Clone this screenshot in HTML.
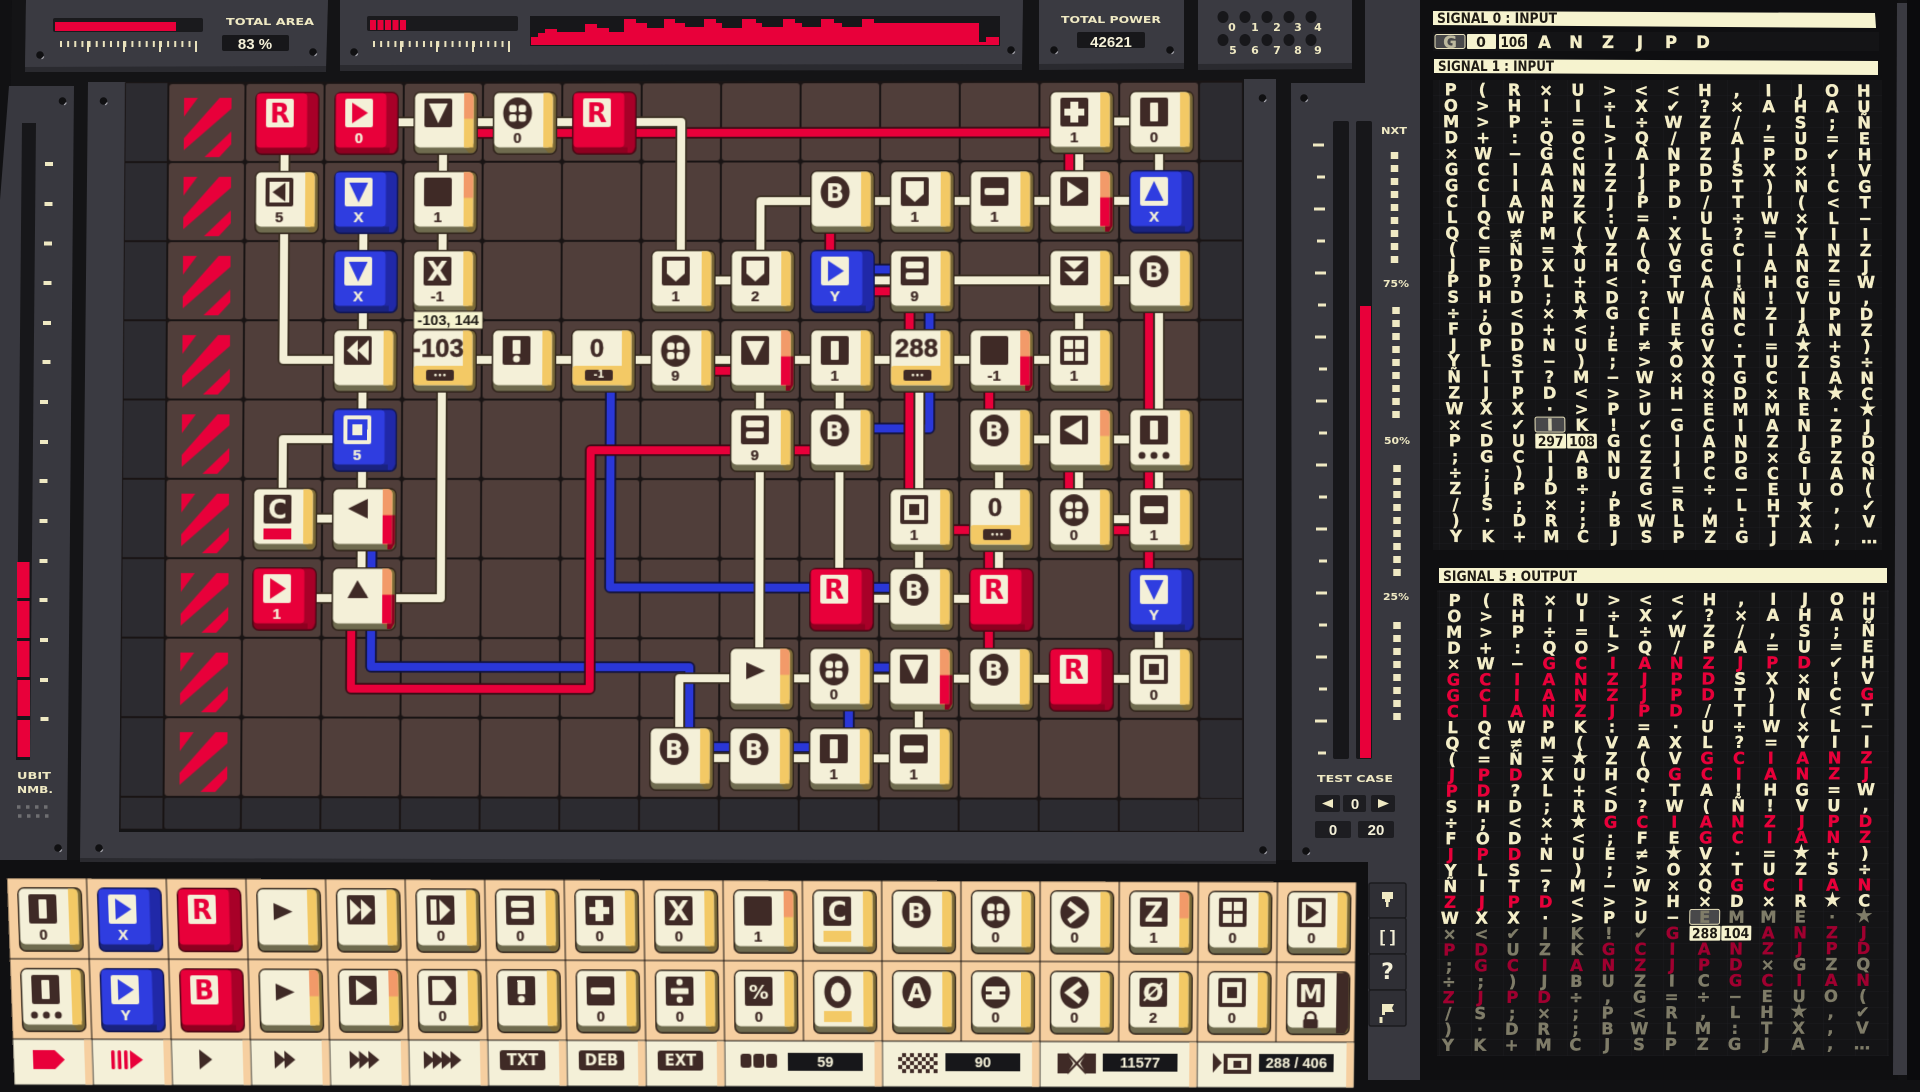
<!DOCTYPE html>
<html><head><meta charset="utf-8"><title>Circuit</title>
<style>
html,body{margin:0;padding:0;background:#111113;width:1920px;height:1080px;overflow:hidden}
svg{display:block}
text{font-family:"DejaVu Sans","Liberation Sans",sans-serif;font-weight:bold;text-anchor:middle}
.v{font-family:"Liberation Sans",sans-serif;font-size:15px;fill:#3f2a26;stroke:#3f2a26;stroke-width:.25}
.w{font-family:"Liberation Sans",sans-serif;font-size:15px;fill:#f4f0d8;stroke:#f4f0d8;stroke-width:.25}
.d{font-family:"Liberation Sans",sans-serif;font-size:26px;fill:#3f2a26;stroke:#3f2a26;stroke-width:.4}
.p{font-size:9px;fill:#f4f0d8}
.g{font-size:25px;fill:#f4f0d8}
.l{font-size:10px;fill:#efe9c3}
.c{font-size:16.5px;fill:#f4eec8;stroke:#f4eec8;stroke-width:.35}
.r{fill:#e8003a;stroke:#e8003a}.q{fill:#a00030;stroke:#a00030}.m{fill:#7f7c68;stroke:#7f7c68}
.t{font-size:20px}
.k{font-size:14px;fill:#1e1a14}
.s{font-size:14px;fill:#1e1a14;text-anchor:start}
.n{font-family:"Liberation Sans",sans-serif;font-size:15px;fill:#f4f0d8}
.b{font-family:"Liberation Sans",sans-serif;font-size:16px;fill:#f4f0d8}
#board,#pal{position:absolute;left:0;top:0;width:0;height:0;transform-origin:0 0}
#board{transform:matrix3d(0.98750,-0.001745,0,-0.000004779,-0.007821,0.98647,0,-0.000006517,0,0,1,0,245.5,83,0,1)}
#pal{transform:matrix3d(0.99743,0.006112,0,0.000003595,0.03702,1.0449,0,0.00003699,0,0,1,0,6.7,878,0,1)}
</style></head><body>

<svg width="0" height="0" style="position:absolute"><defs>
<g id="tc"><rect width="65" height="64" rx="7" fill="#2d2118"/><rect x="1.5" y="1.5" width="62" height="61" rx="5.5" fill="#6f6b4f"/><path d="M51 56V2H59Q63.500 2 63.500 7V56Q63.500 60 60 62H56Z" fill="#7c6a36"/><rect x="1.5" y="1.5" width="59" height="55" rx="5" fill="#f4f0d8"/><path d="M51 1.5h5q4.500 0 4.500 5V56.500H51z" fill="#f3c965"/></g>
<g id="tr"><rect width="65" height="64" rx="7" fill="#470814"/><rect x="1.5" y="1.500" width="62" height="61" rx="5.500" fill="#8e0020"/><path d="M51 1.500h7q5.500 0 5.500 5.500V56L60 62H56V56.500H51z" fill="#a80028"/><rect x="1.5" y="1.500" width="51" height="55" rx="4" fill="#e8003a"/></g>
<g id="tb"><rect width="65" height="64" rx="7" fill="#10154f"/><rect x="1.5" y="1.500" width="62" height="61" rx="5.500" fill="#1a2380"/><path d="M51 1.500h7q5.500 0 5.500 5.500V56L60 62H56V56.500H51z" fill="#2028a8"/><rect x="1.5" y="1.500" width="51" height="55" rx="4" fill="#2f3de0"/></g>
<path id="so" d="M51 1.500h5q4.500 0 4.500 5V27.500H51z" fill="#f29a69"/>
<g id="sr"><path d="M51 1.500h5q4.500 0 4.500 5V27.500H51z" fill="#f29a69"/><path d="M51 27.500h9.500V56.500H51z" fill="#e8003a"/><path d="M60.500 27.500h3V56L60 62H56V56.500h4.500z" fill="#8e0020"/></g>
<rect id="bD" x="11" y="7" width="28" height="29" rx="2" fill="#3f2a26"/>
<rect id="bC" x="11" y="7" width="28" height="29" rx="2" fill="#f4f0d8"/>
<polygon id="gDn" points="15.500,12 34.500,12 25,32"/>
<polygon id="gUp" points="25,11 34.500,31 15.500,31"/>
<polygon id="gRt" points="18,11 34,21.500 18,32"/>
<ellipse id="eD" cx="25" cy="22" rx="14.500" ry="16" fill="#3f2a26"/>

<g id="nI"><use href="#tc"/><use href="#bD"/><rect x="21" y="12" width="8" height="19" rx="1" fill="#f4f0d8"/></g>
<g id="nDn"><use href="#tc"/><use href="#bD"/></g>
<g id="nSh"><use href="#tc"/><use href="#bD"/><polygon points="16,11 34,11 34,24 25,32 16,24" fill="#f4f0d8"/></g>
<g id="nMi"><use href="#tc"/><use href="#bD"/><rect x="15" y="18" width="20" height="7" rx="2" fill="#f4f0d8"/></g>
<g id="nEq"><use href="#tc"/><use href="#bD"/><rect x="16" y="12" width="18" height="7" rx="2" fill="#f4f0d8"/><rect x="16" y="23" width="18" height="7" rx="2" fill="#f4f0d8"/></g>
<g id="nPl"><use href="#tc"/><use href="#bD"/><path d="M21 11h8v7h6v7h-6v7h-8v-7h-6v-7h6z" fill="#f4f0d8"/></g>
<g id="nX"><use href="#tc"/><use href="#bD"/><text class="g" x="25" y="31" style="font-size:27px">X</text></g>
<g id="nBoxL"><use href="#tc"/><use href="#bD"/><rect x="15" y="11" width="20" height="21" fill="#f4f0d8"/><polygon points="31,12 31,31 18,21.500" fill="#3f2a26"/></g>
<g id="nLL"><use href="#tc"/><use href="#bD"/><polygon points="25,11 25,32 14,21.500" fill="#f4f0d8"/><polygon points="36,11 36,32 25,21.500" fill="#f4f0d8"/></g>
<g id="nDD"><use href="#tc"/><use href="#bD"/><polygon points="15,11 35,11 25,20" fill="#f4f0d8"/><polygon points="15,22 35,22 25,32" fill="#f4f0d8"/></g>
<g id="nEx"><use href="#tc"/><use href="#bD"/><rect x="21" y="11" width="8" height="14" rx="1" fill="#f4f0d8"/><circle cx="25" cy="30" r="3.500" fill="#f4f0d8"/></g>
<g id="nFo"><use href="#tc"/><use href="#eD"/><rect x="16.500" y="13.500" width="7.500" height="7.500" rx="2.500" fill="#f4f0d8"/><rect x="26" y="13.500" width="7.500" height="7.500" rx="2.500" fill="#f4f0d8"/><rect x="16.500" y="23" width="7.500" height="7.500" rx="2.500" fill="#f4f0d8"/><rect x="26" y="23" width="7.500" height="7.500" rx="2.500" fill="#f4f0d8"/></g>
<g id="nB"><use href="#tc"/><use href="#eD"/><text class="g" x="25" y="31" style="font-size:24px">B</text></g>
<g id="nA"><use href="#tc"/><use href="#eD"/><text class="g" x="25" y="31" style="font-size:24px">A</text></g>
<g id="nGr"><use href="#tc"/><use href="#bD"/><rect x="15" y="11" width="9" height="9" fill="#f4f0d8"/><rect x="26" y="11" width="9" height="9" fill="#f4f0d8"/><rect x="15" y="23" width="9" height="9" fill="#f4f0d8"/><rect x="26" y="23" width="9" height="9" fill="#f4f0d8"/></g>
<g id="nSq"><use href="#tc"/><use href="#bD"/><rect x="15" y="11" width="20" height="21" fill="#f4f0d8"/><rect x="20" y="16" width="10" height="11" fill="#3f2a26"/></g>
<g id="nC"><use href="#tc"/><use href="#bD"/><text class="g" x="25" y="31" style="font-size:26px">C</text></g>
<g id="nZ"><use href="#tc"/><use href="#bD"/><text class="g" x="25" y="31" style="font-size:26px">Z</text></g>
<g id="nPc"><use href="#tc"/><use href="#bD"/><text class="g" x="25" y="29" style="font-size:20px">%</text></g>
<g id="nDv"><use href="#tc"/><use href="#bD"/><rect x="16" y="18.500" width="18" height="6" rx="1" fill="#f4f0d8"/><circle cx="25" cy="12.500" r="3.200" fill="#f4f0d8"/><circle cx="25" cy="30" r="3.200" fill="#f4f0d8"/></g>
<g id="nO"><use href="#tc"/><ellipse cx="25" cy="22" rx="13.500" ry="16" fill="#3f2a26"/><ellipse cx="25" cy="22" rx="7" ry="9.500" fill="#f4f0d8"/></g>
<g id="nH"><use href="#tc"/><use href="#eD"/><path d="M15 16h20v5h-6v3h6v5H15v-5h6v-3h-6z" fill="#f4f0d8"/></g>
<g id="ncR"><use href="#tc"/><use href="#eD"/><path d="M19 13 31 22 19 31" fill="none" stroke="#f4f0d8" stroke-width="5.500"/></g>
<g id="ncL"><use href="#tc"/><use href="#eD"/><path d="M31 13 19 22 31 31" fill="none" stroke="#f4f0d8" stroke-width="5.500"/></g>
<g id="nSl"><use href="#tc"/><use href="#bD"/><text class="g" x="25" y="30" style="font-size:25px">Ø</text></g>
<g id="nBxR"><use href="#tc"/><use href="#bD"/><rect x="15" y="11" width="20" height="21" fill="#f4f0d8"/><polygon points="19,13 32,21.500 19,30" fill="#3f2a26"/></g>
<g id="nPt"><use href="#tc"/><use href="#bD"/><polygon points="15,11 27,11 35,21.500 27,32 15,32" fill="#f4f0d8"/></g>
<g id="nIR"><use href="#tc"/><use href="#bD"/><rect x="15" y="11" width="6" height="21" fill="#f4f0d8"/><polygon points="24,11 35,21.500 24,32" fill="#f4f0d8"/></g>
<g id="nRR"><use href="#tc"/><use href="#bD"/><polygon points="14,11 14,32 25,21.500" fill="#f4f0d8"/><polygon points="25,11 25,32 36,21.500" fill="#f4f0d8"/></g>
<polygon id="pBR" points="17,15 36,23.500 17,32" fill="#3f2a26"/>
<polygon id="pBL" points="36,11 36,31 16,21" fill="#3f2a26"/>
<polygon id="pBU" points="26,13 37,31 16,31" fill="#3f2a26"/>
<g id="nbDn"><use href="#tb"/><use href="#bC"/><use href="#gDn" fill="#2f3de0"/></g>
<g id="nbUp"><use href="#tb"/><use href="#bC"/><use href="#gUp" fill="#2f3de0"/></g>
<g id="nbRt"><use href="#tb"/><use href="#bC"/><use href="#gRt" fill="#2f3de0"/></g>
<g id="nbSq"><use href="#tb"/><use href="#bC"/><rect x="15" y="11" width="20" height="21" fill="#2f3de0"/><rect x="20" y="16" width="10" height="11" fill="#f4f0d8"/></g>
<g id="nR"><use href="#tr"/><use href="#bC"/><text x="25" y="31" style="font-size:26px;fill:#e8003a">R</text></g>
<g id="nrB"><use href="#tr"/><use href="#bC"/><text x="25" y="31" style="font-size:26px;fill:#e8003a">B</text></g>
<g id="nrRt"><use href="#tr"/><use href="#bC"/><use href="#gRt" fill="#e8003a"/></g>
<g id="nDs"><use href="#tc"/><rect x="1.500" y="37" width="59" height="19.500" rx="3" fill="#f3c965"/><rect x="14" y="41" width="28" height="11" rx="2" fill="#3f2a26"/></g>
<g id="dots"><circle cx="13" cy="47" r="3.500" fill="#3f2a26"/><circle cx="25" cy="47" r="3.500" fill="#3f2a26"/><circle cx="37" cy="47" r="3.500" fill="#3f2a26"/></g>
<g id="st"><polygon points="0,0 14,0 0,19"/><polygon points="0,53 0,41 36,0 48,0 48,11"/><polygon points="21,60 48,34 48,47 36,60"/></g>
<g id="sc"><circle r="3.800" fill="#101012"/><path d="M1.500 3.800A4 4 0 0 0 3.800 1.500" stroke="#a5a5ad" stroke-width="1.200" fill="none"/></g>
<pattern id="pc" width="80" height="80" patternUnits="userSpaceOnUse"><rect x="1" y="1" width="78" height="78" rx="3" fill="#503e3a"/></pattern>
<pattern id="pd" width="80" height="80" patternUnits="userSpaceOnUse"><rect x="1" y="1" width="78" height="78" rx="2" fill="#2c2b30"/></pattern>
<pattern id="ck" width="8" height="8" patternUnits="userSpaceOnUse"><rect width="4" height="4" fill="#3f2a26"/><rect x="4" y="4" width="4" height="4" fill="#3f2a26"/></pattern>
<pattern id="gl" width="32" height="16" patternUnits="userSpaceOnUse"><path d="M32 0V16M0 16H32" stroke="#1d1d20" stroke-width="1"/></pattern>
<path id="wB" fill="none" stroke-linejoin="round" d="M600 189H680M690 200V349H600M370 280V509H680M130 440V589H450V680M450 669H610M610 589V669M600 589H680"/>
<path id="wR" fill="none" stroke-linejoin="round" d="M200 51H840M830 51V120M590 120V200M600 211H680M670 211V440M440 291H520M750 280V360M910 200V520M830 360V440M750 440V600M680 451H760M840 451H920M110 520V611H350V371H600"/>
<path id="wC" fill="none" stroke-linejoin="round" d="M40 40V280H120M120 120V520M120 360H40V440H120M40 520H120M200 40V280M200 280V520H120M120 40H440V200M840 40H920M840 40V120M920 40V120M520 200V120H920M440 200H520M600 200H920M840 200V280M920 200V440M920 520V600M200 280H840M520 280V600M600 280V520M680 280V520M760 360V520M760 360H920M840 360V440M840 440H920M600 520H760M440 680V600H920M680 600V680M440 680H680"/>
</defs></svg>

<svg width="1920" height="1080" viewBox="0 0 1920 1080" style="position:absolute;left:0;top:0">
<rect width="1920" height="1080" fill="#111113"/>
<!-- rear dark area -->
<polygon points="12,0 1420,0 1420,880 0,880" fill="#141416"/>
<rect x="0" y="860" width="1370" height="220" fill="#101012"/>
<!-- top panels -->
<g fill="#2a2a2f"><polygon points="26,0 328,0 326,72 25,72"/><polygon points="340,0 1023,0 1022,70 340,71"/><polygon points="1039,0 1184,0 1184,69 1039,70"/><polygon points="1198,0 1352,0 1352,69 1198,70"/></g>
<g fill="#3a3a41"><polygon points="26,0 328,0 326,66 25,67"/><polygon points="340,0 1023,0 1022,64 340,65"/><polygon points="1039,0 1184,0 1184,63 1039,64"/><polygon points="1198,0 1352,0 1352,63 1198,64"/></g>
<!-- panel 1 -->
<rect x="53" y="18" width="150" height="14" rx="2" fill="#1a1a1d"/><rect x="55" y="22" width="121" height="9" fill="#e8003a"/>
<path d="M60 44H197" stroke="#e9e2bd" stroke-width="6" stroke-dasharray="2 5.140"/>
<path d="M88 41V52M124 41V52M160 41V52M196 41V52" stroke="#e9e2bd" stroke-width="2"/>
<text class="l" x="270" y="25" textLength="88" lengthAdjust="spacingAndGlyphs">TOTAL AREA</text>
<rect x="222" y="35" width="67" height="16" rx="2" fill="#17171a"/><text class="n" x="255" y="49" style="font-size:15px">83 %</text>
<use href="#sc" x="40" y="55"/><use href="#sc" x="313" y="52"/>
<!-- panel 2 -->
<rect x="367" y="16" width="151" height="15" rx="2" fill="#1a1a1d"/>
<path d="M370 25H407" stroke="#e8003a" stroke-width="10" stroke-dasharray="6 1.500"/>
<path d="M373 44H510" stroke="#e9e2bd" stroke-width="6" stroke-dasharray="2 5.140"/>
<path d="M401 41V52M437 41V52M473 41V52M509 41V52" stroke="#e9e2bd" stroke-width="2"/>
<rect x="530" y="16" width="470" height="30" fill="#17171a"/>
<path d="M531 45V37H538V33H545V29H557V32H585V24H597V28H609V32H624V19H636V23H647V28H664V19H675V23H685V27H704V19H716V23H722V28H742V19H756V23H762V27H783V19H795V23H802V27H821V19H834V23H842V27H862V19H874V23H979V42H986V37H999V45Z" fill="#e8003a"/>
<use href="#sc" x="354" y="52"/><use href="#sc" x="1011" y="50"/>
<!-- panel 3 -->
<text class="l" x="1111" y="23" textLength="100" lengthAdjust="spacingAndGlyphs">TOTAL POWER</text>
<rect x="1077" y="32" width="68" height="16" rx="2" fill="#17171a"/><text class="n" x="1111" y="47">42621</text>
<use href="#sc" x="1054" y="50"/><use href="#sc" x="1170" y="50"/>
<!-- panel 4 -->
<g fill="#17171a"><ellipse cx="1223" cy="17" rx="5.500" ry="6"/><ellipse cx="1245" cy="17" rx="5.500" ry="6"/><ellipse cx="1267" cy="17" rx="5.500" ry="6"/><ellipse cx="1289" cy="17" rx="5.500" ry="6"/><ellipse cx="1311" cy="17" rx="5.500" ry="6"/><ellipse cx="1223" cy="40" rx="5.500" ry="6"/><ellipse cx="1245" cy="40" rx="5.500" ry="6"/><ellipse cx="1267" cy="40" rx="5.500" ry="6"/><ellipse cx="1289" cy="40" rx="5.500" ry="6"/><ellipse cx="1311" cy="40" rx="5.500" ry="6"/></g>
<g style="font-size:11px"><text class="l" x="1232" y="31" style="font-size:11px">0</text><text class="l" x="1255" y="31" style="font-size:11px">1</text><text class="l" x="1277" y="31" style="font-size:11px">2</text><text class="l" x="1298" y="31" style="font-size:11px">3</text><text class="l" x="1318" y="31" style="font-size:11px">4</text><text class="l" x="1233" y="54" style="font-size:11px">5</text><text class="l" x="1255" y="54" style="font-size:11px">6</text><text class="l" x="1277" y="54" style="font-size:11px">7</text><text class="l" x="1298" y="54" style="font-size:11px">8</text><text class="l" x="1318" y="54" style="font-size:11px">9</text></g>

<!-- left panel -->
<polygon points="9,86 74,86 67,860 0,860 0,200" fill="#38383f"/>
<polygon points="22,123 36,123 30,760 16,760" fill="#17171a"/>
<g fill="#e8003a"><rect x="17" y="562" width="12.500" height="36"/><rect x="17" y="601" width="12.500" height="37"/><rect x="17" y="641" width="12.500" height="36"/><rect x="17.500" y="680" width="12.500" height="36"/><rect x="17.500" y="720" width="12.500" height="37"/></g>
<path d="M45 164h8M44.500 204h8M44 243.500h8M43.500 283h8M43 323h8M42.500 362h8M40 402h8M40 442h8M39.500 481h8M39.500 521h8M39.500 561h8M39.500 600h8M40 640h8M40 680h8M40.500 719h8" stroke="#efe9c3" stroke-width="4"/>
<text class="l" x="34" y="779" textLength="34" lengthAdjust="spacingAndGlyphs">UBIT</text>
<text class="l" x="35" y="793" textLength="36" lengthAdjust="spacingAndGlyphs">NMB.</text>
<path d="M17 807H52M18 816H53" stroke="#6f6f72" stroke-width="3.500" stroke-dasharray="3.500 5.500"/>
<use href="#sc" x="62.500" y="101"/><use href="#sc" x="58" y="848"/>
<!-- board frame -->
<polygon points="88,82 126,82 119,832 1244,832 1244,79 1276,79 1276,863 80,860" fill="#3a3a41"/>
<polygon points="80,858 1276,861 1276,864 80,862" fill="#2a2a2f"/>
<use href="#sc" x="103.500" y="101"/><use href="#sc" x="99" y="848"/><use href="#sc" x="1262.500" y="98"/><use href="#sc" x="1263" y="850"/>
<!-- right panel -->
<polygon points="1291,83 1365,83 1365,0 1420,0 1420,1080 1368,1080 1368,862 1292,862" fill="#38383f"/>
<use href="#sc" x="1304" y="98"/><use href="#sc" x="1306" y="851"/>
<rect x="1333" y="121" width="16" height="638" rx="2" fill="#17171a"/>
<rect x="1356" y="121" width="16" height="638" rx="2" fill="#17171a"/>
<rect x="1360" y="306" width="11" height="452" fill="#e8003a"/>
<path d="M1313 145h11M1317 177h8M1314 209h11M1317 241h8M1315 273h11M1318 305h8M1315 337h11M1319 369h8M1316 401h11M1319 433h8M1316 465h11M1319 497h8M1316 529h11M1319 561h8M1316 593h11M1319 625h8M1316 657h11M1319 689h8M1315 721h12M1318 753h8" stroke="#efe9c3" stroke-width="3"/>
<text class="l" x="1394" y="134" textLength="26" lengthAdjust="spacingAndGlyphs">NXT</text>
<path d="M1394.500 152V269" stroke="#efe9c3" stroke-width="7.500" stroke-dasharray="7 6"/>
<text class="l" x="1396" y="287" textLength="26" lengthAdjust="spacingAndGlyphs">75%</text>
<path d="M1396 307V424" stroke="#efe9c3" stroke-width="7.500" stroke-dasharray="7 6"/>
<text class="l" x="1397" y="444" textLength="26" lengthAdjust="spacingAndGlyphs">50%</text>
<path d="M1397 465V582" stroke="#efe9c3" stroke-width="7.500" stroke-dasharray="7 6"/>
<text class="l" x="1396" y="600" textLength="26" lengthAdjust="spacingAndGlyphs">25%</text>
<path d="M1397 622V726" stroke="#efe9c3" stroke-width="7.500" stroke-dasharray="7 6"/>
<text class="l" x="1355" y="782" textLength="76" lengthAdjust="spacingAndGlyphs">TEST CASE</text>
<g fill="#1d1d21"><rect x="1315" y="795" width="25" height="17" rx="2"/><rect x="1343" y="795" width="23" height="17" rx="2"/><rect x="1371" y="795" width="24" height="17" rx="2"/><rect x="1315" y="821" width="36" height="17" rx="2"/><rect x="1358" y="821" width="36" height="17" rx="2"/></g>
<polygon points="1322,803.500 1333,799 1333,808" fill="#efe9c3"/><polygon points="1389,803.500 1378,799 1378,808" fill="#efe9c3"/>
<text class="n" x="1355" y="809">0</text><text class="n" x="1333" y="835">0</text><text class="n" x="1376" y="835">20</text>
<!-- side tool buttons -->
<g fill="#2f2f35" stroke="#1b1b1e" stroke-width="1.500"><rect x="1369" y="883" width="37" height="35" rx="2"/><rect x="1369" y="918" width="37" height="36" rx="2"/><rect x="1369" y="954" width="37" height="36" rx="2"/><rect x="1369" y="990" width="37" height="36" rx="2"/></g>
<path d="M1382 892h11v7h-3v3h-1.500v5h-2.500v-5h-1v-3h-3z" fill="#efe9c3"/>
<text class="b" x="1387.500" y="942" style="font-size:17px">[ ]</text>
<text class="b" x="1387.500" y="979" style="font-size:22px;font-family:'DejaVu Sans'">?</text>
<path d="M1382 1004h12l-2 4 2 4h-9v3h-3zM1379.500 1017h3v6h-3z" fill="#efe9c3"/>

<!-- signal panel -->
<rect x="1420" y="0" width="478" height="1080" fill="#0f0f11"/>
<polygon points="1897,3 1907,3 1907,1075 1893,1075" fill="#3a3a41"/>
<rect x="1907" y="0" width="13" height="1080" fill="#0b0b0d"/>
<rect x="1433" y="32" width="446" height="19" fill="#141416"/>
<rect x="1433" y="80" width="449" height="470" fill="#141416"/><rect x="1433" y="80" width="449" height="470" fill="url(#gl)"/>
<rect x="1437" y="590" width="452" height="466" fill="#141416"/><rect x="1437" y="590" width="452" height="466" fill="url(#gl)"/>
<polygon points="1433,11 1875,13 1876,28 1433,25" fill="#f6f3cf"/>
<text class="s" x="1437" y="23" textLength="120" lengthAdjust="spacingAndGlyphs">SIGNAL 0 : INPUT</text>
<rect x="1435" y="34.500" width="30" height="14" rx="2" fill="#48484a" stroke="#e9e2bd"/><text class="c" x="1450" y="48" style="fill:#bdb99f;stroke:#bdb99f">G</text>
<rect x="1467" y="34" width="29" height="15" rx="1" fill="#f6f3cf"/><text class="k" x="1481" y="47">0</text>
<rect x="1499" y="34" width="28" height="15" rx="1" fill="#f6f3cf"/><text class="k" x="1513" y="47" textLength="25" lengthAdjust="spacingAndGlyphs">106</text>
<text class="c" x="1544.500 1576 1608 1640 1671 1703" y="48">ANZJPD</text>
<polygon points="1434,59 1878,61 1878,75 1434,73" fill="#f6f3cf"/>
<text class="s" x="1438" y="71" textLength="116" lengthAdjust="spacingAndGlyphs">SIGNAL 1 : INPUT</text>
<polygon points="1439,568 1887,568 1887,583 1439,583" fill="#f6f3cf"/>
<text class="s" x="1443" y="581" textLength="134" lengthAdjust="spacingAndGlyphs">SIGNAL 5 : OUTPUT</text>

<g transform="matrix(0.993,0.003,0.0118,0.997,1450.7,89.3)">
<rect x="81" y="328.500" width="30" height="15" rx="2" fill="#48484a" stroke="#e9e2bd"/>
<rect x="81" y="345" width="31" height="15" rx="1" fill="#f6f3cf"/><rect x="113" y="345" width="30" height="15" rx="1" fill="#f6f3cf"/>
<text class="k" x="96.500" y="357.500" textLength="26" lengthAdjust="spacingAndGlyphs">297</text><text class="k" x="128" y="357.500" textLength="26" lengthAdjust="spacingAndGlyphs">108</text>
<text class="c" x="96" y="342" style="fill:#cfcbae;stroke:#cfcbae">I</text>
<text class="c" x="0 32 64 96 128 160 192 224 256 288 320 352 384 416" y="6">P(R×U&gt;&lt;&lt;H,IJOH</text>
<text class="c" x="0 32 64 96 128 160 192 224 256 288 320 352 384 416" y="22">O&gt;HII÷X✔?×AHAU</text>
<text class="c" x="0 32 64 96 128 160 192 224 256 288 320 352 384 416" y="38">M&gt;P÷=L÷WZ/,S;Ñ</text>
<text class="c" x="0 32 64 96 128 160 192 224 256 288 320 352 384 416" y="54">D+:QO&gt;Q/PA=U=E</text>
<text class="c" x="0 32 64 96 128 160 192 224 256 288 320 352 384 416" y="70">×W−GCIANZJPD✔H</text>
<text class="c" x="0 32 64 96 128 160 192 224 256 288 320 352 384 416" y="86">GCIANZJPDSX×!V</text>
<text class="c" x="0 32 64 96 128 160 192 224 256 288 320 352 384 416" y="102">GCIANZJPDT)NCG</text>
<text class="c" x="0 32 64 96 128 160 192 224 256 288 320 352 384 416" y="118">CIANZJPD/TI(&lt;T</text>
<text class="c" x="0 32 64 96 128 160 192 224 256 288 320 352 384 416" y="134">LQWPK:=·U÷W×L−</text>
<text class="c" x="0 32 64 96 128 160 192 224 256 288 320 352 384 416" y="150">QC≠M(VAXL?=YII</text>
<text class="c" x="0 32 64 96 128 160 192 224 256 288 320 352 384 416" y="166">(=Ñ=<tspan class="t">★</tspan>Z(VGCIANZ</text>
<text class="c" x="0 32 64 96 128 160 192 224 256 288 320 352 384 416" y="182">JPDXUHQGCIANZJ</text>
<text class="c" x="0 32 64 96 128 160 192 224 256 288 320 352 384 416" y="198">PD?L+&lt;·TA!HG=W</text>
<text class="c" x="0 32 64 96 128 160 192 224 256 288 320 352 384 416" y="214">SHD;RD?W(Ñ!VU,</text>
<text class="c" x="0 32 64 96 128 160 192 224 256 288 320 352 384 416" y="230">÷;&lt;×<tspan class="t">★</tspan>GCIANZJPD</text>
<text class="c" x="0 32 64 96 128 160 192 224 256 288 320 352 384 416" y="246">FOD+&lt;;FEGCIANZ</text>
<text class="c" x="0 32 64 96 128 160 192 224 256 288 320 352 384 416" y="262">JPDNUE≠<tspan class="t">★</tspan>V·=<tspan class="t">★</tspan>+)</text>
<text class="c" x="0 32 64 96 128 160 192 224 256 288 320 352 384 416" y="278">YLS−);&gt;OXTUZS÷</text>
<text class="c" x="0 32 64 96 128 160 192 224 256 288 320 352 384 416" y="294">ÑIT?M−W×QGCIAN</text>
<text class="c" x="0 32 64 96 128 160 192 224 256 288 320 352 384 416" y="310">ZJPD&lt;&gt;&gt;H×D×R<tspan class="t">★</tspan>C</text>
<text class="c" x="0 32 64 96 128 160 192 224 256 288 320 352 384 416" y="326">WXX·&gt;PU−EMME·<tspan class="t">★</tspan></text>
<text class="c" x="0 32 64 128 160 192 224 256 288 320 352 384 416" y="342">×&lt;✔K!✔GCIANZJ</text>
<text class="c" x="0 32 64 160 192 224 256 288 320 352 384 416" y="358">PDUGCIANZJPD</text>
<text class="c" x="0 32 64 96 128 160 192 224 256 288 320 352 384 416" y="374">;GCIANZJPD×GZQ</text>
<text class="c" x="0 32 64 96 128 160 192 224 256 288 320 352 384 416" y="390">÷;)JBUZICGCIAN</text>
<text class="c" x="0 32 64 96 128 160 192 224 256 288 320 352 384 416" y="406">ZJPD÷,G=÷−EUO(</text>
<text class="c" x="0 32 64 96 128 160 192 224 256 288 320 352 384 416" y="422">/S;×;P&lt;R,LH<tspan class="t">★</tspan>,✔</text>
<text class="c" x="0 32 64 96 128 160 192 224 256 288 320 352 384 416" y="438">)·DR;BWLM:TX,V</text>
<text class="c" x="0 32 64 96 128 160 192 224 256 288 320 352 384 416" y="454">YK+MCJSPZGJA,…</text>
</g>

<g transform="matrix(0.9957,-0.0036,-0.015,0.993,1454.6,600)">
<rect x="241" y="312.500" width="30" height="15" rx="2" fill="#48484a" stroke="#e9e2bd"/>
<rect x="241" y="329" width="31" height="15" rx="1" fill="#f6f3cf"/><rect x="273" y="329" width="30" height="15" rx="1" fill="#f6f3cf"/>
<text class="k" x="256.500" y="341.500" textLength="26" lengthAdjust="spacingAndGlyphs">288</text><text class="k" x="288" y="341.500" textLength="26" lengthAdjust="spacingAndGlyphs">104</text>
<text class="c" x="0 32 64 96 128 160 192 224 256 288 320 352 384 416" y="6">P(R×U&gt;&lt;&lt;H,IJOH</text>
<text class="c" x="0 32 64 96 128 160 192 224 256 288 320 352 384 416" y="22">O&gt;HII÷X✔?×AHAU</text>
<text class="c" x="0 32 64 96 128 160 192 224 256 288 320 352 384 416" y="38">M&gt;P÷=L÷WZ/,S;Ñ</text>
<text class="c" x="0 32 64 96 128 160 192 224 256 288 320 352 384 416" y="54">D+:QO&gt;Q/PA=U=E</text>
<text class="c" x="0 32 64 96 128 160 192 224 256 288 320 352 384 416" y="70">×W−<tspan class="r">GCIANZJPD</tspan>✔H</text>
<text class="c" x="0 32 64 96 128 160 192 224 256 288 320 352 384 416" y="86"><tspan class="r">GCIANZJPD</tspan>SX×!V</text>
<text class="c" x="0 32 64 96 128 160 192 224 256 288 320 352 384 416" y="102"><tspan class="r">GCIANZJPD</tspan>T)NC<tspan class="r">G</tspan></text>
<text class="c" x="0 32 64 96 128 160 192 224 256 288 320 352 384 416" y="118"><tspan class="r">CIANZJPD</tspan>/TI(&lt;T</text>
<text class="c" x="0 32 64 96 128 160 192 224 256 288 320 352 384 416" y="134">LQWPK:=·U÷W×L−</text>
<text class="c" x="0 32 64 96 128 160 192 224 256 288 320 352 384 416" y="150">QC≠M(VAXL?=YII</text>
<text class="c" x="0 32 64 96 128 160 192 224 256 288 320 352 384 416" y="166">(=Ñ=<tspan class="t">★</tspan>Z(V<tspan class="r">GCIANZ</tspan></text>
<text class="c" x="0 32 64 96 128 160 192 224 256 288 320 352 384 416" y="182"><tspan class="r">JPD</tspan>XUHQ<tspan class="r">GCIANZJ</tspan></text>
<text class="c" x="0 32 64 96 128 160 192 224 256 288 320 352 384 416" y="198"><tspan class="r">PD</tspan>?L+&lt;·TA!HG=W</text>
<text class="c" x="0 32 64 96 128 160 192 224 256 288 320 352 384 416" y="214">SHD;RD?W(Ñ!VU,</text>
<text class="c" x="0 32 64 96 128 160 192 224 256 288 320 352 384 416" y="230">÷;&lt;×<tspan class="t">★</tspan><tspan class="r">GCIANZJPD</tspan></text>
<text class="c" x="0 32 64 96 128 160 192 224 256 288 320 352 384 416" y="246">FOD+&lt;;FE<tspan class="r">GCIANZ</tspan></text>
<text class="c" x="0 32 64 96 128 160 192 224 256 288 320 352 384 416" y="262"><tspan class="r">JPD</tspan>NUE≠<tspan class="t">★</tspan>V·=<tspan class="t">★</tspan>+)</text>
<text class="c" x="0 32 64 96 128 160 192 224 256 288 320 352 384 416" y="278">YLS−);&gt;OXTUZS÷</text>
<text class="c" x="0 32 64 96 128 160 192 224 256 288 320 352 384 416" y="294">ÑIT?M−W×Q<tspan class="r">GCIAN</tspan></text>
<text class="c" x="0 32 64 96 128 160 192 224 256 288 320 352 384 416" y="310"><tspan class="r">ZJPD</tspan>&lt;&gt;&gt;H×D×R<tspan class="t">★</tspan>C</text>
<text class="c" x="0 32 64 96 128 160 192 224 256 288 320 352 384 416" y="326">WXX·&gt;PU−<tspan class="m">EMME·<tspan class="t">★</tspan></tspan></text>
<text class="c" x="0 32 64 96 128 160 192 224 320 352 384 416" y="342" style="fill:#7f7c68;stroke:#7f7c68">×&lt;✔IK!✔<tspan class="q">GANZJ</tspan></text>
<text class="c" x="0 32 64 96 128 160 192 224 256 288 320 352 384 416" y="358" style="fill:#7f7c68;stroke:#7f7c68"><tspan class="q">PD</tspan>UZK<tspan class="q">GCIANZJPD</tspan></text>
<text class="c" x="0 32 64 96 128 160 192 224 256 288 320 352 384 416" y="374" style="fill:#7f7c68;stroke:#7f7c68">;<tspan class="q">GCIANZJPD</tspan>×GZQ</text>
<text class="c" x="0 32 64 96 128 160 192 224 256 288 320 352 384 416" y="390" style="fill:#7f7c68;stroke:#7f7c68">÷;)JBUZIC<tspan class="q">GCIAN</tspan></text>
<text class="c" x="0 32 64 96 128 160 192 224 256 288 320 352 384 416" y="406" style="fill:#7f7c68;stroke:#7f7c68"><tspan class="q">ZJPD</tspan>÷,G=÷−EUO(</text>
<text class="c" x="0 32 64 96 128 160 192 224 256 288 320 352 384 416" y="422" style="fill:#7f7c68;stroke:#7f7c68">/S;×;P&lt;R,LH<tspan class="t">★</tspan>,✔</text>
<text class="c" x="0 32 64 96 128 160 192 224 256 288 320 352 384 416" y="438" style="fill:#7f7c68;stroke:#7f7c68">)·DR;BWLM:TX,V</text>
<text class="c" x="0 32 64 96 128 160 192 224 256 288 320 352 384 416" y="454" style="fill:#7f7c68;stroke:#7f7c68">YK+MCJSPZGJA,…</text>
</g>
</svg>

<!-- BOARD -->
<div id="board"><svg width="1150" height="780" viewBox="-130 -10 1150 780" style="position:absolute;left:-130px;top:-10px;overflow:visible">
<rect x="-122" y="-1" width="1126" height="754" fill="#191414"/>
<rect x="0" y="0" width="960" height="720" fill="url(#pc)"/>
<rect x="960" y="0" width="43" height="720" fill="url(#pd)"/>
<rect x="-121" y="0" width="42" height="752" fill="#2c2b30"/>
<rect x="-1" y="720" width="961" height="32" fill="url(#pd)"/>
<rect x="960" y="720" width="43" height="32" fill="#2c2b30"/>
<rect x="-77" y="721" width="76" height="31" rx="2" fill="#2c2b30"/>
<path d="M-121 80H-79M-121 160H-79M-121 240H-79M-121 320H-79M-121 400H-79M-121 480H-79M-121 560H-79M-121 640H-79M-121 720H-79M960 80H1003M960 160H1003M960 240H1003M960 320H1003M960 400H1003M960 480H1003M960 560H1003M960 640H1003" stroke="#191414" stroke-width="2"/>
<g fill="#503e3a"><rect x="-77" y="1" width="76" height="78" rx="3"/><rect x="-77" y="81" width="76" height="78" rx="3"/><rect x="-77" y="161" width="76" height="78" rx="3"/><rect x="-77" y="241" width="76" height="78" rx="3"/><rect x="-77" y="321" width="76" height="78" rx="3"/><rect x="-77" y="401" width="76" height="78" rx="3"/><rect x="-77" y="481" width="76" height="78" rx="3"/><rect x="-77" y="561" width="76" height="78" rx="3"/><rect x="-77" y="641" width="76" height="78" rx="3"/></g>
<g fill="#e8003a"><use href="#st" x="-62" y="15"/><use href="#st" x="-62" y="95"/><use href="#st" x="-62" y="175"/><use href="#st" x="-62" y="255"/><use href="#st" x="-62" y="335"/><use href="#st" x="-62" y="415"/><use href="#st" x="-62" y="495"/><use href="#st" x="-62" y="575"/><use href="#st" x="-62" y="655"/></g>
<!-- wires -->
<use href="#wB" stroke="#10123f" stroke-width="11.500"/><use href="#wB" stroke="#2a37d8" stroke-width="8"/>
<use href="#wR" stroke="#3c0a14" stroke-width="11.500"/><use href="#wR" stroke="#e8003a" stroke-width="8"/>
<use href="#wC" stroke="#3a2f22" stroke-width="11.500"/><use href="#wC" stroke="#f3efd6" stroke-width="8"/>
<!-- row 0 -->
<use href="#nR" x="10" y="9"/>
<use href="#nrRt" x="90" y="9"/><text class="w" x="115" y="61">0</text>
<use href="#nDn" x="170" y="9"/><use href="#gDn" x="170" y="9" fill="#f4f0d8"/><use href="#so" x="170" y="9"/>
<use href="#nFo" x="250" y="9"/><text class="v" x="275" y="61">0</text>
<use href="#nR" x="330" y="9"/>
<use href="#nPl" x="810" y="9"/><text class="v" x="835" y="61">1</text>
<use href="#nI" x="890" y="9"/><text class="v" x="915" y="61">0</text>
<!-- row 1 -->
<use href="#nBoxL" x="10" y="89"/><text class="v" x="35" y="141">5</text>
<use href="#nbDn" x="90" y="89"/><text class="w" x="115" y="141">X</text>
<use href="#nDn" x="170" y="89"/><use href="#so" x="170" y="89"/><text class="v" x="195" y="141">1</text>
<use href="#nB" x="570" y="89"/>
<use href="#nSh" x="650" y="89"/><text class="v" x="675" y="141">1</text>
<use href="#nMi" x="730" y="89"/><text class="v" x="755" y="141">1</text>
<use href="#nDn" x="810" y="89"/><use href="#gRt" x="810" y="89" fill="#f4f0d8"/><use href="#sr" x="810" y="89"/>
<use href="#nbUp" x="890" y="89"/><text class="w" x="915" y="141">X</text>
<!-- row 2 -->
<use href="#nbDn" x="90" y="169"/><text class="w" x="115" y="221">X</text>
<use href="#nX" x="170" y="169"/><text class="v" x="195" y="221">-1</text>
<use href="#nSh" x="410" y="169"/><text class="v" x="435" y="221">1</text>
<use href="#nSh" x="490" y="169"/><text class="v" x="515" y="221">2</text>
<use href="#nbRt" x="570" y="169"/><text class="w" x="595" y="221">Y</text>
<use href="#nEq" x="650" y="169"/><text class="v" x="675" y="221">9</text>
<use href="#nDD" x="810" y="169"/>
<use href="#nB" x="890" y="169"/>
<!-- row 3 -->
<use href="#nLL" x="90" y="249"/>
<use href="#nDs" x="170" y="249"/><text class="d" x="196" y="277">-103</text><text class="p" x="198" y="298" style="font-size:7px">•••</text>
<use href="#nEx" x="250" y="249"/>
<use href="#nDs" x="330" y="249"/><text class="d" x="356" y="277">0</text><text class="p" x="358" y="298" style="font-size:10px">-1</text>
<use href="#nFo" x="410" y="249"/><text class="v" x="435" y="301">9</text>
<use href="#nDn" x="490" y="249"/><use href="#gDn" x="490" y="249" fill="#f4f0d8"/><use href="#sr" x="490" y="249"/>
<use href="#nI" x="570" y="249"/><text class="v" x="595" y="301">1</text>
<use href="#nDs" x="650" y="249"/><text class="d" x="677" y="277">288</text><text class="p" x="678" y="298" style="font-size:7px">•••</text>
<use href="#nDn" x="730" y="249"/><use href="#sr" x="730" y="249"/><text class="v" x="755" y="301">-1</text>
<use href="#nGr" x="810" y="249"/><text class="v" x="835" y="301">1</text>
<!-- row 4 -->
<use href="#nbSq" x="90" y="329"/><text class="w" x="115" y="381">5</text>
<use href="#nEq" x="490" y="329"/><text class="v" x="515" y="381">9</text>
<use href="#nB" x="570" y="329"/>
<use href="#nB" x="730" y="329"/>
<use href="#nDn" x="810" y="329"/><polygon points="843,340 843,361 825,350.500" fill="#f4f0d8"/><use href="#so" x="810" y="329"/>
<use href="#nI" x="890" y="329"/><use href="#dots" x="890" y="329"/>
<!-- row 5 -->
<use href="#nC" x="10" y="409"/><rect x="21" y="450" width="28" height="11" fill="#e8003a"/>
<use href="#tc" x="90" y="409"/><use href="#pBL" x="90" y="409"/><use href="#sr" x="90" y="409"/>
<use href="#nSq" x="650" y="409"/><text class="v" x="675" y="461">1</text>
<use href="#nDs" x="730" y="409"/><text class="d" x="756" y="437">0</text><text class="p" x="758" y="458" style="font-size:7px">•••</text>
<use href="#nFo" x="810" y="409"/><text class="v" x="835" y="461">0</text>
<use href="#nMi" x="890" y="409"/><text class="v" x="915" y="461">1</text>
<!-- row 6 -->
<use href="#nrRt" x="10" y="489"/><text class="w" x="35" y="541">1</text>
<use href="#tc" x="90" y="489"/><use href="#pBU" x="90" y="489"/><use href="#sr" x="90" y="489"/>
<use href="#nR" x="570" y="489"/>
<use href="#nB" x="650" y="489"/>
<use href="#nR" x="730" y="489"/>
<use href="#nbDn" x="890" y="489"/><text class="w" x="915" y="541">Y</text>
<!-- row 7 -->
<use href="#tc" x="490" y="569"/><use href="#pBR" x="490" y="569"/><use href="#so" x="490" y="569"/>
<use href="#nFo" x="570" y="569"/><text class="v" x="595" y="621">0</text>
<use href="#nDn" x="650" y="569"/><use href="#gDn" x="650" y="569" fill="#f4f0d8"/><use href="#sr" x="650" y="569"/>
<use href="#nB" x="730" y="569"/>
<use href="#nR" x="810" y="569"/>
<use href="#nSq" x="890" y="569"/><text class="v" x="915" y="621">0</text>
<!-- row 8 -->
<use href="#nB" x="410" y="649"/>
<use href="#nB" x="490" y="649"/>
<use href="#nI" x="570" y="649"/><text class="v" x="595" y="701">1</text>
<use href="#nMi" x="650" y="649"/><text class="v" x="675" y="701">1</text>
<!-- tooltip -->
<rect x="171" y="231" width="70" height="18" rx="1" fill="#f6f3cf" stroke="#2d2118" stroke-width="1"/>
<text class="k" x="206" y="245" textLength="62" lengthAdjust="spacingAndGlyphs" style="font-family:'Liberation Sans';font-size:15px">-103, 144</text>
</svg></div>

<!-- PALETTE -->
<div id="pal"><svg width="1360" height="210" viewBox="0 0 1360 210" style="position:absolute;left:0;top:0;overflow:visible">
<rect x="0" y="0" width="1360" height="205" fill="#16110f"/>
<g fill="#f6cfa0"><rect x=".5" y=".5" width="79" height="79"/><rect x="80.500" y=".5" width="79" height="79"/><rect x="160.500" y=".5" width="79" height="79"/><rect x="240.500" y=".5" width="79" height="79"/><rect x="320.500" y=".5" width="79" height="79"/><rect x="400.500" y=".5" width="79" height="79"/><rect x="480.500" y=".5" width="79" height="79"/><rect x="560.500" y=".5" width="79" height="79"/><rect x="640.500" y=".5" width="79" height="79"/><rect x="720.500" y=".5" width="79" height="79"/><rect x="800.500" y=".5" width="79" height="79"/><rect x="880.500" y=".5" width="79" height="79"/><rect x="960.500" y=".5" width="79" height="79"/><rect x="1040.500" y=".5" width="79" height="79"/><rect x="1120.500" y=".5" width="79" height="79"/><rect x="1200.500" y=".5" width="79" height="79"/><rect x="1280.500" y=".5" width="79" height="79"/>
<rect x=".5" y="80.500" width="79" height="79"/><rect x="80.500" y="80.500" width="79" height="79"/><rect x="160.500" y="80.500" width="79" height="79"/><rect x="240.500" y="80.500" width="79" height="79"/><rect x="320.500" y="80.500" width="79" height="79"/><rect x="400.500" y="80.500" width="79" height="79"/><rect x="480.500" y="80.500" width="79" height="79"/><rect x="560.500" y="80.500" width="79" height="79"/><rect x="640.500" y="80.500" width="79" height="79"/><rect x="720.500" y="80.500" width="79" height="79"/><rect x="800.500" y="80.500" width="79" height="79"/><rect x="880.500" y="80.500" width="79" height="79"/><rect x="960.500" y="80.500" width="79" height="79"/><rect x="1040.500" y="80.500" width="79" height="79"/><rect x="1120.500" y="80.500" width="79" height="79"/><rect x="1200.500" y="80.500" width="79" height="79"/><rect x="1280.500" y="80.500" width="79" height="79"/></g>
<!-- row A -->
<use href="#nI" x="10" y="9"/><text class="v" x="35" y="61">0</text>
<use href="#nbRt" x="90" y="9"/><text class="w" x="115" y="61">X</text>
<use href="#nR" x="170" y="9"/>
<use href="#tc" x="250" y="9"/><use href="#pBR" x="250" y="9"/>
<use href="#nRR" x="330" y="9"/>
<use href="#nIR" x="410" y="9"/><text class="v" x="435" y="61">0</text>
<use href="#nEq" x="490" y="9"/><text class="v" x="515" y="61">0</text>
<use href="#nPl" x="570" y="9"/><text class="v" x="595" y="61">0</text>
<use href="#nX" x="650" y="9"/><text class="v" x="675" y="61">0</text>
<use href="#nDn" x="730" y="9"/><use href="#so" x="730" y="9"/><text class="v" x="755" y="61">1</text>
<use href="#nC" x="810" y="9"/><rect x="821" y="50" width="28" height="11" fill="#f3c965"/>
<use href="#nB" x="890" y="9"/>
<use href="#nFo" x="970" y="9"/><text class="v" x="995" y="61">0</text>
<use href="#ncR" x="1050" y="9"/><text class="v" x="1075" y="61">0</text>
<use href="#nZ" x="1130" y="9"/><use href="#so" x="1130" y="9"/><text class="v" x="1155" y="61">1</text>
<use href="#nGr" x="1210" y="9"/><text class="v" x="1235" y="61">0</text>
<use href="#nBxR" x="1290" y="9"/><text class="v" x="1315" y="61">0</text>
<!-- row B -->
<use href="#nI" x="10" y="89"/><use href="#dots" x="10" y="89"/>
<use href="#nbRt" x="90" y="89"/><text class="w" x="115" y="141">Y</text>
<use href="#nrB" x="170" y="89"/>
<use href="#tc" x="250" y="89"/><use href="#pBR" x="250" y="89"/><use href="#so" x="250" y="89"/>
<use href="#nDn" x="330" y="89"/><use href="#gRt" x="330" y="89" fill="#f4f0d8"/><use href="#so" x="330" y="89"/>
<use href="#nPt" x="410" y="89"/><text class="v" x="435" y="141">0</text>
<use href="#nEx" x="490" y="89"/>
<use href="#nMi" x="570" y="89"/><text class="v" x="595" y="141">0</text>
<use href="#nDv" x="650" y="89"/><text class="v" x="675" y="141">0</text>
<use href="#nPc" x="730" y="89"/><text class="v" x="755" y="141">0</text>
<use href="#nO" x="810" y="89"/><rect x="821" y="130" width="28" height="11" fill="#f3c965"/>
<use href="#nA" x="890" y="89"/>
<use href="#nH" x="970" y="89"/><text class="v" x="995" y="141">0</text>
<use href="#ncL" x="1050" y="89"/><text class="v" x="1075" y="141">0</text>
<use href="#nSl" x="1130" y="89"/><text class="v" x="1155" y="141">2</text>
<use href="#nSq" x="1210" y="89"/><text class="v" x="1235" y="141">0</text>
<use href="#tc" x="1290" y="89"/><path d="M1341 90.500h7q5.500 0 5.500 5V145L1350 151h-9z" fill="#3f2a26"/><use href="#bD" x="1290" y="89"/><text class="g" x="1315" y="120" style="font-size:24px">M</text>
<path d="M1310 138v-3a5 5 0 0 1 10 0v3" fill="none" stroke="#3f2a26" stroke-width="2.500"/><rect x="1307.500" y="137" width="15" height="9" rx="1.500" fill="#3f2a26"/>
<!-- row C -->
<g fill="#f4f0d8"><rect x=".5" y="160.500" width="79" height="45"/><rect x="80.500" y="160.500" width="79" height="45"/><rect x="160.500" y="160.500" width="79" height="45"/><rect x="240.500" y="160.500" width="79" height="45"/><rect x="320.500" y="160.500" width="79" height="45"/><rect x="400.500" y="160.500" width="79" height="45"/><rect x="480.500" y="160.500" width="79" height="45"/><rect x="560.500" y="160.500" width="79" height="45"/><rect x="640.500" y="160.500" width="79" height="45"/><rect x="720.500" y="160.500" width="159" height="45"/><rect x="880.500" y="160.500" width="159" height="45"/><rect x="1040.500" y="160.500" width="159" height="45"/><rect x="1200.500" y="160.500" width="159" height="45"/></g>
<g fill="#f6cfa0"><rect x="72" y="160.500" width="7.500" height="45"/><rect x="152" y="160.500" width="7.500" height="45"/><rect x="232" y="160.500" width="7.500" height="45"/><rect x="312" y="160.500" width="7.500" height="45"/><rect x="392" y="160.500" width="7.500" height="45"/><rect x="472" y="160.500" width="7.500" height="45"/><rect x="552" y="160.500" width="7.500" height="45"/><rect x="632" y="160.500" width="7.500" height="45"/><rect x="712" y="160.500" width="7.500" height="45"/><rect x="872" y="160.500" width="7.500" height="45"/><rect x="1032" y="160.500" width="7.500" height="45"/><rect x="1192" y="160.500" width="7.500" height="45"/><rect x="1352" y="160.500" width="7.500" height="45"/></g>
<polygon points="20,171 42,171 52,180.500 42,190 20,190" fill="#e8003a"/>
<g fill="#e8003a"><rect x="99" y="171" width="3.500" height="19" rx="1.500"/><rect x="105.500" y="171" width="3.500" height="19" rx="1.500"/><rect x="112" y="171" width="3.500" height="19" rx="1.500"/><polygon points="118,171 131,180.500 118,190"/></g>
<g fill="#3f2a26"><polygon points="188,170 201,180 188,190"/><polygon points="264,171 275,180 264,189"/><polygon points="274,171 285,180 274,189"/><polygon points="340,171 351,180 340,189"/><polygon points="349.500,171 360.500,180 349.500,189"/><polygon points="359,171 370,180 359,189"/><polygon points="415,171 426,180 415,189"/><polygon points="424,171 435,180 424,189"/><polygon points="433,171 444,180 433,189"/><polygon points="442,171 453,180 442,189"/></g>
<rect x="492" y="170" width="46" height="20" rx="3" fill="#3f2a26"/><text class="n" x="515" y="185.500" style="font-family:'DejaVu Sans';font-size:15px">TXT</text>
<rect x="572" y="170" width="46" height="20" rx="3" fill="#3f2a26"/><text class="n" x="595" y="185.500" style="font-family:'DejaVu Sans';font-size:15px">DEB</text>
<rect x="652" y="170" width="46" height="20" rx="3" fill="#3f2a26"/><text class="n" x="675" y="185.500" style="font-family:'DejaVu Sans';font-size:15px">EXT</text>
<g fill="#3f2a26"><rect x="736" y="173" width="11" height="14" rx="3"/><rect x="749" y="173" width="11" height="14" rx="3"/><rect x="762" y="173" width="11" height="14" rx="3"/></g>
<rect x="784" y="172" width="76" height="18" fill="#17171a"/><text class="n" x="822" y="186">59</text>
<rect x="896" y="172" width="40" height="20" fill="url(#ck)"/>
<rect x="944" y="172" width="76" height="18" fill="#17171a"/><text class="n" x="982" y="186">90</text>
<polygon points="1058,172 1068,172 1074,182 1068,192 1058,192" fill="#3f2a26"/><polygon points="1097,172 1087,172 1081,182 1087,192 1097,192" fill="#3f2a26"/><path d="M1068 172L1087 192M1087 172L1068 192" stroke="#3f2a26" stroke-width="2"/>
<rect x="1104" y="172" width="76" height="18" fill="#17171a"/><text class="n" x="1142" y="186">11577</text>
<polygon points="1216,171 1225,181 1216,191" fill="#3f2a26"/>
<rect x="1227" y="172" width="28" height="20" fill="#3f2a26"/><rect x="1231" y="176" width="20" height="12" fill="#f4f0d8"/><rect x="1237" y="179" width="8" height="7" fill="#3f2a26"/>
<rect x="1263" y="172" width="76" height="18" fill="#17171a"/><text class="n" x="1301" y="186">288 / 406</text>
</svg></div>
</body></html>
